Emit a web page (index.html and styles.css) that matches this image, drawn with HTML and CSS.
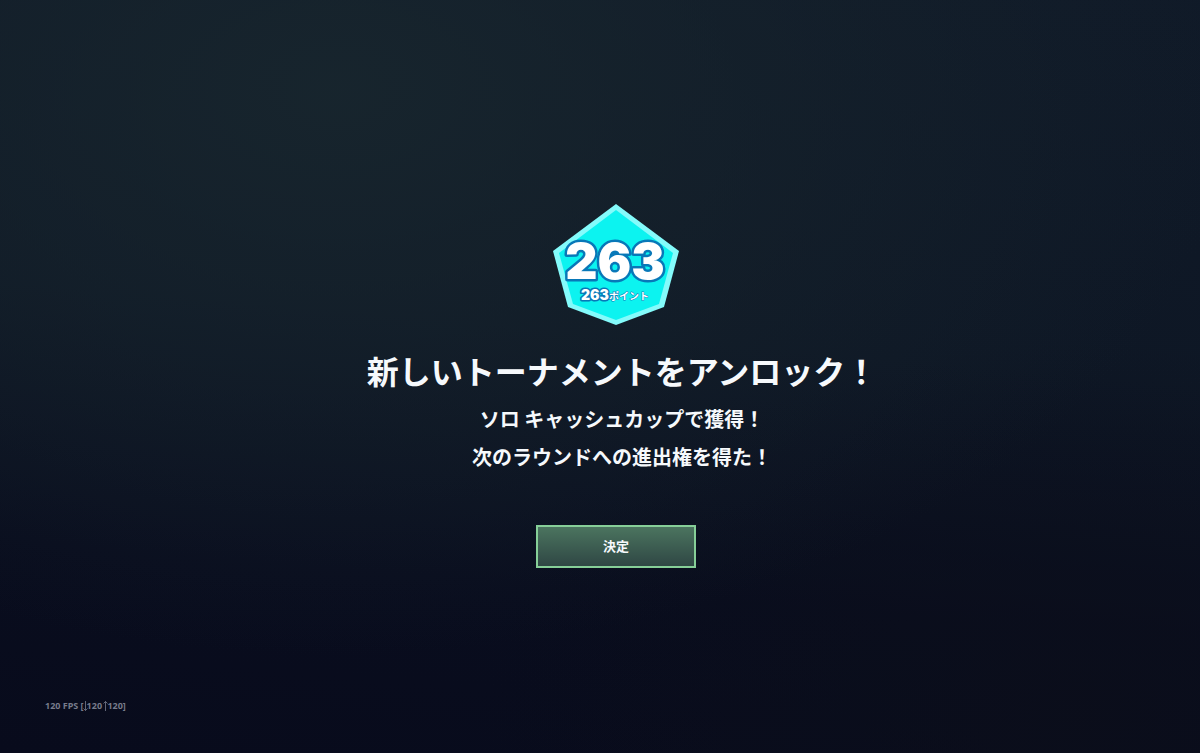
FILE: index.html
```html
<!DOCTYPE html>
<html lang="ja">
<head>
    <meta charset="UTF-8">
    <meta name="viewport" content="width=device-width, initial-scale=1.0">
    <title>新しいトーナメントをアンロック！</title>
    <link rel="stylesheet" href="styles.css">
</head>
<body>
<main class="unlock">
    <svg class="badge" viewBox="0 0 128 122" role="img" aria-label="263ポイント">
        <polygon class="badge-border" points="64,1 127,48 112,104 64,122 16,104 1,48"/>
        <polygon class="badge-face" points="64,7 121,50 107,101 64,117 21,101 7,50"/>
        <text class="badge-score" x="63" y="76">263</text>
        <text class="badge-points" x="63" y="97"><tspan class="badge-value">263</tspan><tspan class="badge-unit">ポイント</tspan></text>
    </svg>

    <div class="message">
        <h1 class="title">新しいトーナメントをアンロック！</h1>
        <p class="text">ソロ キャッシュカップで獲得！</p>
        <p class="text">次のラウンドへの進出権を得た！</p>
    </div>

    <button class="button" type="button">決定</button>
</main>

<footer class="footer">120 FPS [<svg class="arrow" viewBox="0 0 3 10"><path d="M1.5 0V10M-0.5 7.5L1.5 9.5L3.5 7.5"/></svg>120 <svg class="arrow" viewBox="0 0 3 10"><path d="M1.5 10V0M-0.5 2.5L1.5 0.5L3.5 2.5"/></svg>120]</footer>
</body>
</html>
```

FILE: styles.css
```css
:root {
    --text-color: #f6f9fc;
    --badge-color: #0cf3f0;
    --badge-border: #84fbfb;
    --outline-color: #0878b8;
    --button-border: #86cf98;
}

* {
    box-sizing: border-box;
    margin: 0;
    padding: 0;
}

body {
    min-height: 100vh;
    display: flex;
    flex-direction: column;
    font-family: "Noto Sans CJK JP", sans-serif;
    color: var(--text-color);
    background:
        radial-gradient(ellipse 75% 75% at 28% 12%, rgba(24, 38, 46, 0.9), rgba(24, 38, 46, 0) 100%),
        radial-gradient(ellipse 50% 50% at 90% 95%, rgba(11, 14, 26, 0.8), rgba(11, 14, 26, 0) 100%),
        linear-gradient(185deg, #101a28 0%, #0e1725 45%, #090d1e 75%, #080b1c 100%);
}

.unlock {
    flex: 1;
    display: flex;
    flex-direction: column;
    align-items: center;
    justify-content: center;
    padding: 72px 0 0 32px;
}

/* Score badge */
.badge {
    width: 128px;
    height: 122px;
    overflow: visible;
}

.badge-border {
    fill: var(--badge-border);
}

.badge-face {
    fill: var(--badge-color);
}

.badge-score,
.badge-points {
    fill: #fff;
    stroke: var(--outline-color);
    stroke-linejoin: round;
    paint-order: stroke;
    text-anchor: middle;
    font-family: Inter, "Noto Sans CJK JP", sans-serif;
    font-weight: 900;
}

.badge-score {
    font-size: 50px;
    stroke-width: 5px;
}

.badge-points {
    font-size: 14px;
    stroke-width: 3px;
}

.badge-unit {
    font-size: 10px;
    font-weight: 700;
    stroke-width: 1px;
}

/* Message */
.message {
    padding-left: 12px;
    margin: 21px 0 49px;
    text-align: center;
}

.title {
    font-size: 32px;
    font-weight: 700;
    line-height: 48px;
    margin-bottom: 6px;
}

.text {
    font-size: 20px;
    font-weight: 700;
    line-height: 38px;
}

.button {
    width: 160px;
    height: 43px;
    padding-bottom: 2px;
    border: 2px solid var(--button-border);
    background: linear-gradient(180deg, #4b745f, #2f4744);
    color: var(--text-color);
    font-family: inherit;
    font-size: 13px;
    font-weight: 700;
    cursor: pointer;
}

.button:hover {
    background: linear-gradient(180deg, #588670, #38554f);
}

/* Frame rate counter */
.footer {
    padding: 0 45px 40px;
    font-family: "Noto Sans", sans-serif;
    font-size: 9px;
    font-weight: 700;
    line-height: 14px;
    color: #777b8b;
}

.arrow {
    width: 3px;
    height: 10px;
    vertical-align: -2px;
    overflow: visible;
    fill: none;
    stroke: #626677;
    stroke-width: 1;
}
```
